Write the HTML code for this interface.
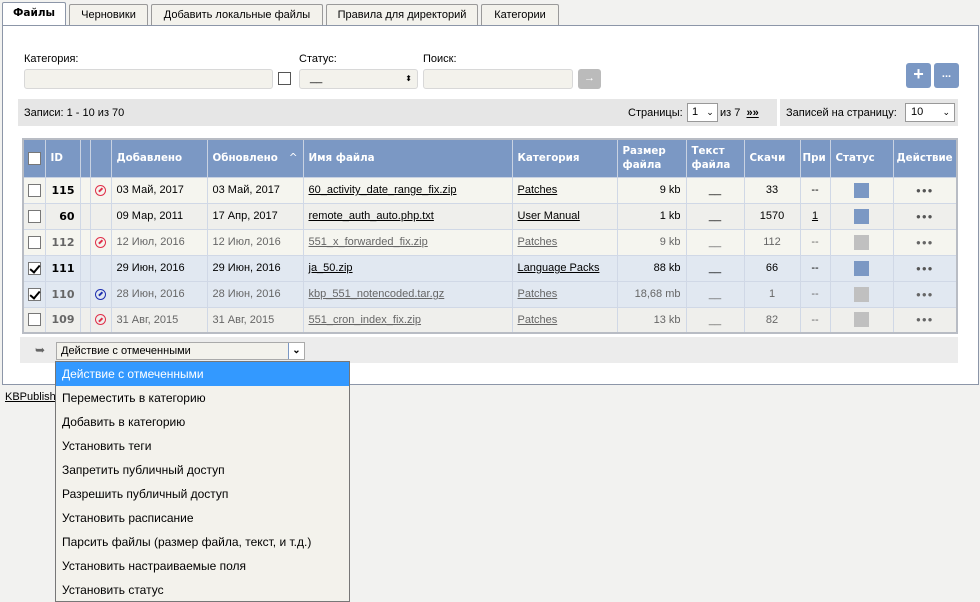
<!DOCTYPE html>
<html><head><meta charset="utf-8"><style>
*{box-sizing:border-box;margin:0;padding:0}
body{width:980px;height:602px;background:#f2f2f0;font-family:"Liberation Sans",sans-serif;font-size:11px;color:#000;position:relative;overflow:hidden}
.a{position:absolute}
.tab{position:absolute;top:4px;height:21px;border:1px solid #9a9a9a;border-bottom:none;background:#f3f2ec;text-align:center;line-height:20px;border-radius:2px 2px 0 0}
.panel{position:absolute;left:2px;top:25px;width:977px;height:360px;background:#fff;border:1px solid #8c96a8}
.inp{position:absolute;height:20px;background:#f3f2ec;border:1px solid #d8d8d8;border-radius:3px}
.btn{position:absolute;background:#7b98c4;color:#fff;border-radius:3px;text-align:center;font-weight:bold}
table{position:absolute;left:22px;top:138px;width:936px;border-collapse:collapse;border:2px solid #b8bcc4;table-layout:fixed}
td,th{border:1px solid #d0d8e6;height:26px;padding:0 5px;white-space:nowrap;overflow:hidden}
th{background:#7b98c4;color:#fff;font-family:"DejaVu Sans",sans-serif;font-size:10.3px;font-weight:bold;text-align:left;height:38px;line-height:14px;border-color:#c8d2e2}
tr.o td{background:#f5f5ef}
tr.e td{background:#efefec}
tr.s td{background:#e1e8f1}
tr.g td{color:#666}
tr.g a{color:#666}
a{color:#000;text-decoration:underline}
.cb{display:inline-block;width:13px;height:13px;border:1px solid #777;background:#fff;vertical-align:middle;position:relative}
.cb.c:after{content:"";position:absolute;left:3px;top:0;width:4px;height:8px;border:solid #000;border-width:0 2px 2px 0;transform:rotate(40deg)}
.id{font-family:"DejaVu Sans",sans-serif;font-weight:bold;text-align:right}
.r{text-align:right}.c{text-align:center}
.sq{display:inline-block;width:15px;height:15px;background:#7b98c4;vertical-align:middle}
.sq.gr{background:#c0c0c0}
.dots{color:#555;font-size:8px;letter-spacing:1px}
.ic{display:inline-block;width:11px;height:11px;border:1.5px solid #e0304a;border-radius:50%;position:relative;vertical-align:middle}
.ic:after{content:"";position:absolute;left:2px;top:3.5px;width:5px;height:1.5px;background:#e0304a;transform:rotate(-45deg)}
.ic.b{border-color:#2030b0}.ic.b:after{background:#2030b0}
.dd{position:absolute;left:55px;top:361px;width:295px;height:241px;background:#f3f2ec;border:1px solid #777;font-size:12px}
.dd div{height:24px;line-height:24px;padding-left:6px}
</style></head><body>
<div class="panel"></div>
<div class="tab" style="left:2px;width:64px;height:23px;top:2px;background:#fff;border-color:#8c96a8;font-weight:bold;font-family:'DejaVu Sans',sans-serif;font-size:10.5px;z-index:2">Файлы</div>
<div class="tab" style="left:69px;width:79px">Черновики</div>
<div class="tab" style="left:151px;width:172px">Добавить локальные файлы</div>
<div class="tab" style="left:326px;width:152px">Правила для директорий</div>
<div class="tab" style="left:481px;width:78px">Категории</div>

<div class="a" style="left:24px;top:53px">Категория:</div>
<div class="a" style="left:299px;top:53px">Статус:</div>
<div class="a" style="left:423px;top:53px">Поиск:</div>
<div class="inp" style="left:24px;top:69px;width:249px"></div>
<div class="a" style="left:278px;top:72px;width:13px;height:13px;border:1px solid #555;background:#fff"></div>
<div class="inp" style="left:299px;top:69px;width:119px;padding-left:10px;line-height:16px">__<span style="position:absolute;right:5px;top:1px;font-size:8px">⬍</span></div>
<div class="inp" style="left:423px;top:69px;width:150px"></div>
<div class="btn" style="left:578px;top:69px;width:23px;height:20px;background:#bbb;line-height:18px;font-weight:normal">→</div>
<div class="btn" style="left:906px;top:63px;width:25px;height:25px;font-size:18px;line-height:23px">+</div>
<div class="btn" style="left:934px;top:63px;width:25px;height:25px;line-height:22px">...</div>

<div class="a" style="left:18px;top:99px;width:759px;height:27px;background:#e6e6e6"></div>
<div class="a" style="left:780px;top:99px;width:178px;height:27px;background:#e6e6e6"></div>
<div class="a" style="left:24px;top:107px">Записи: 1 - 10 из 70</div>
<div class="a" style="left:628px;top:107px">Страницы:</div>
<div class="a" style="left:687px;top:103px;width:31px;height:19px;background:#fff;border:1px solid #999;padding-left:4px;line-height:17px">1 <span style="font-size:9px;margin-left:5px">⌄</span></div>
<div class="a" style="left:720px;top:107px">из 7 &nbsp;<a href="#" style="font-weight:bold">»»</a></div>
<div class="a" style="left:786px;top:107px">Записей на страницу:</div>
<div class="a" style="left:905px;top:103px;width:50px;height:19px;background:#fff;border:1px solid #999;padding-left:5px;line-height:17px">10<span style="position:absolute;right:4px;font-size:9px">⌄</span></div>

<table>
<colgroup><col style="width:22px"><col style="width:35px"><col style="width:10px"><col style="width:21px"><col style="width:96px"><col style="width:96px"><col style="width:209px"><col style="width:105px"><col style="width:69px"><col style="width:58px"><col style="width:56px"><col style="width:30px"><col style="width:63px"><col></colgroup>
<tr><th style="padding:0 4px"><span class="cb"></span></th><th>ID</th><th style="padding:0"></th><th></th><th>Добавлено</th><th>Обновлено <span style="float:right;font-weight:normal">^</span></th><th>Имя файла</th><th>Категория</th><th>Размер<br>файла</th><th>Текст<br>файла</th><th>Скачи</th><th style="padding:0 2px">При</th><th>Статус</th><th style="padding:0 3px">Действие</th></tr>
<tr class="o"><td style="padding:0 4px"><span class="cb"></span></td><td class="id">115</td><td></td><td class="c" style="padding:0"><span class="ic"></span></td><td>03 Май, 2017</td><td>03 Май, 2017</td><td><a href="#">60_activity_date_range_fix.zip</a></td><td><a href="#">Patches</a></td><td class="r">9 kb</td><td class="c">__</td><td class="c">33</td><td class="c">--</td><td class="c"><span class="sq"></span></td><td class="c dots">●●●</td></tr>
<tr class="e"><td style="padding:0 4px"><span class="cb"></span></td><td class="id">60</td><td></td><td></td><td>09 Мар, 2011</td><td>17 Апр, 2017</td><td><a href="#">remote_auth_auto.php.txt</a></td><td><a href="#">User Manual</a></td><td class="r">1 kb</td><td class="c">__</td><td class="c">1570</td><td class="c"><a href="#">1</a></td><td class="c"><span class="sq"></span></td><td class="c dots">●●●</td></tr>
<tr class="o g"><td style="padding:0 4px"><span class="cb"></span></td><td class="id">112</td><td></td><td class="c" style="padding:0"><span class="ic"></span></td><td>12 Июл, 2016</td><td>12 Июл, 2016</td><td><a href="#">551_x_forwarded_fix.zip</a></td><td><a href="#">Patches</a></td><td class="r">9 kb</td><td class="c">__</td><td class="c">112</td><td class="c">--</td><td class="c"><span class="sq gr"></span></td><td class="c dots">●●●</td></tr>
<tr class="s"><td style="padding:0 4px"><span class="cb c"></span></td><td class="id">111</td><td></td><td></td><td>29 Июн, 2016</td><td>29 Июн, 2016</td><td><a href="#">ja_50.zip</a></td><td><a href="#">Language Packs</a></td><td class="r">88 kb</td><td class="c">__</td><td class="c">66</td><td class="c">--</td><td class="c"><span class="sq"></span></td><td class="c dots">●●●</td></tr>
<tr class="s g"><td style="padding:0 4px"><span class="cb c"></span></td><td class="id">110</td><td></td><td class="c" style="padding:0"><span class="ic b"></span></td><td>28 Июн, 2016</td><td>28 Июн, 2016</td><td><a href="#">kbp_551_notencoded.tar.gz</a></td><td><a href="#">Patches</a></td><td class="r">18,68 mb</td><td class="c">__</td><td class="c">1</td><td class="c">--</td><td class="c"><span class="sq gr"></span></td><td class="c dots">●●●</td></tr>
<tr class="e g"><td style="padding:0 4px"><span class="cb"></span></td><td class="id">109</td><td></td><td class="c" style="padding:0"><span class="ic"></span></td><td>31 Авг, 2015</td><td>31 Авг, 2015</td><td><a href="#">551_cron_index_fix.zip</a></td><td><a href="#">Patches</a></td><td class="r">13 kb</td><td class="c">__</td><td class="c">82</td><td class="c">--</td><td class="c"><span class="sq gr"></span></td><td class="c dots">●●●</td></tr>
</table>

<div class="a" style="left:20px;top:337px;width:938px;height:26px;background:#ececec"></div>
<div class="a" style="left:35px;top:343px;color:#666;font-size:12px">➥</div>
<div class="a" style="left:56px;top:342px;width:249px;height:18px;background:#f3f2ec;border:1px solid #aaa;padding-left:4px;line-height:16px">Действие с отмеченными<span style="position:absolute;right:0;top:0;width:16px;height:16px;border-left:1px solid #7b98c4;background:#fff;text-align:center;font-weight:bold;font-size:10px">⌄</span></div>
<a href="#" class="a" style="left:5px;top:391px">KBPublisher</a>
<div class="dd">
<div style="background:#3399ff;color:#fff">Действие с отмеченными</div>
<div>Переместить в категорию</div>
<div>Добавить в категорию</div>
<div>Установить теги</div>
<div>Запретить публичный доступ</div>
<div>Разрешить публичный доступ</div>
<div>Установить расписание</div>
<div>Парсить файлы (размер файла, текст, и т.д.)</div>
<div>Установить настраиваемые поля</div>
<div>Установить статус</div>
</div>
</body></html>
